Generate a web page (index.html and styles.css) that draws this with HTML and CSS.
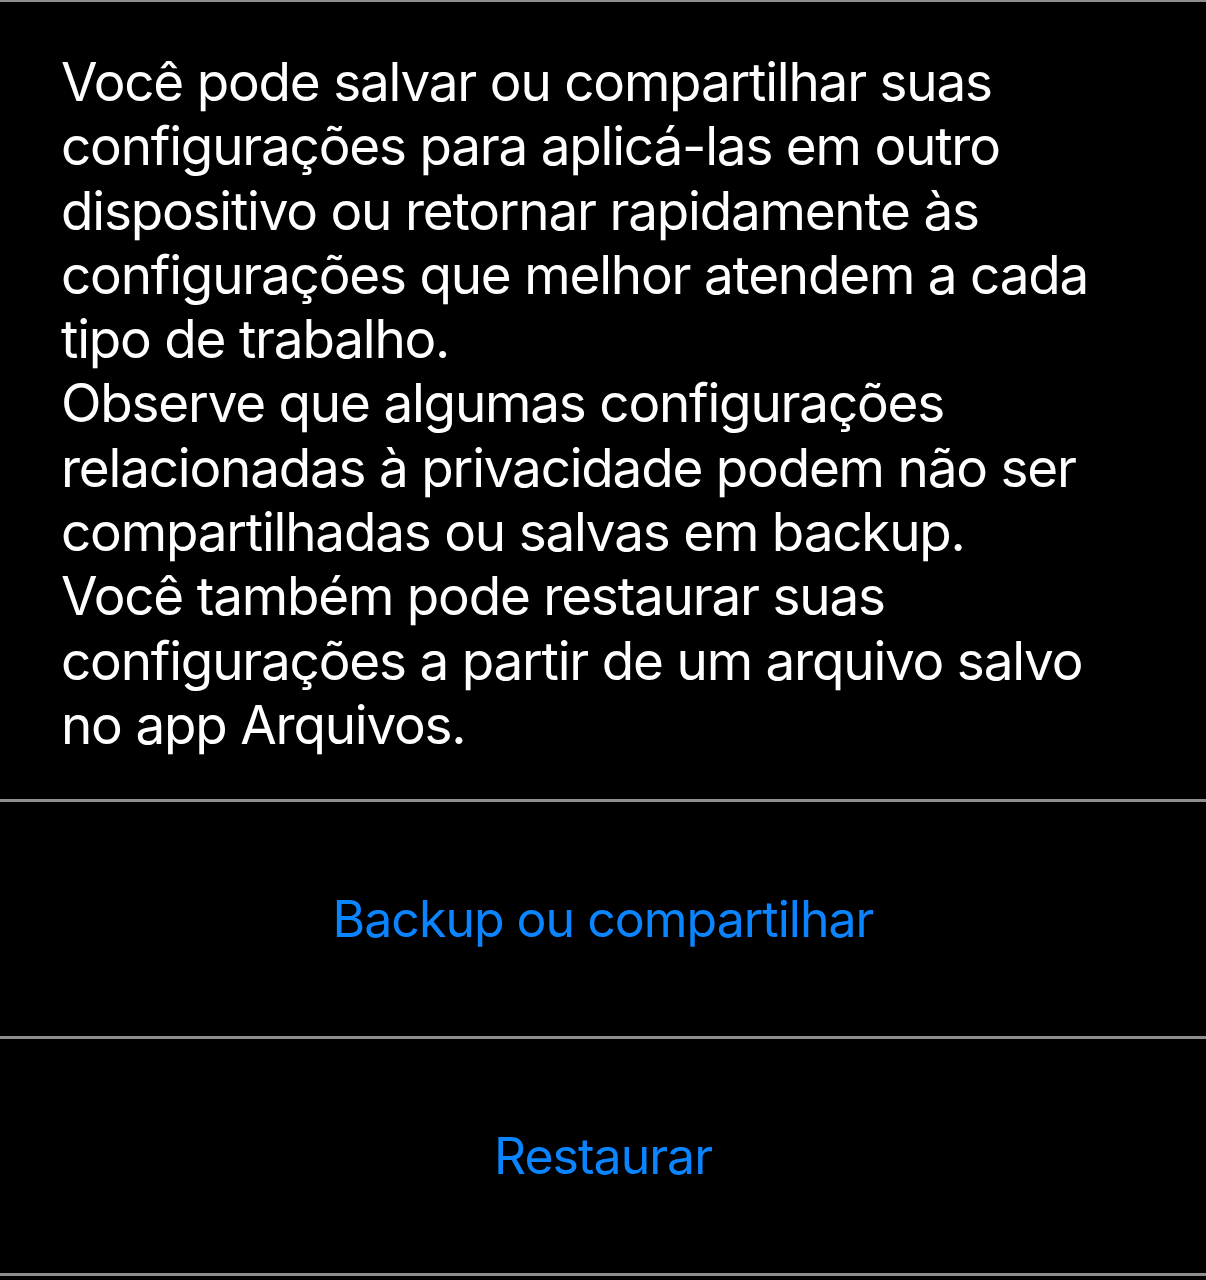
FILE: index.html
```html
<!DOCTYPE html>
<html lang="pt-BR">
<head>
    <meta charset="UTF-8">
    <meta name="viewport" content="width=device-width, initial-scale=1.0">
    <title>Backup de configurações</title>
    <link rel="stylesheet" href="styles.css">
</head>
<body>
    <div class="screen">
        <!-- Texto explicativo -->
        <p class="info">
            <span class="line">Você pode salvar ou compartilhar suas</span>
            <span class="line">configurações para aplicá-las em outro</span>
            <span class="line">dispositivo ou retornar rapidamente às</span>
            <span class="line">configurações que melhor atendem a cada</span>
            <span class="line">tipo de trabalho.</span>
            <span class="line">Observe que algumas configurações</span>
            <span class="line">relacionadas à privacidade podem não ser</span>
            <span class="line">compartilhadas ou salvas em backup.</span>
            <span class="line">Você também pode restaurar suas</span>
            <span class="line">configurações a partir de um arquivo salvo</span>
            <span class="line">no app Arquivos.</span>
        </p>

        <!-- Ações -->
        <div class="action">Backup ou compartilhar</div>
        <div class="action">Restaurar</div>
    </div>
</body>
</html>
```

FILE: styles.css
```css
body {
    margin: 0;
    background-color: #000;
    font-family: Inter, "Noto Sans", sans-serif;
}
.screen {
    border-top: 2px solid #8e8e8e;
}
.info {
    margin: 0;
    padding: 48px 40px 42px 61px;
    color: #fff;
    font-size: 53px;
    line-height: 64.3px;
    letter-spacing: -1.2px;
}
.line {
    display: block;
    white-space: nowrap;
}
.action {
    height: 234px;
    display: flex;
    align-items: center;
    justify-content: center;
    border-top: 3px solid #8e8e8e;
    color: #0a84ff;
    font-size: 50px;
    letter-spacing: -1px;
}
.action:last-child {
    border-bottom: 3px solid #8e8e8e;
}
```
